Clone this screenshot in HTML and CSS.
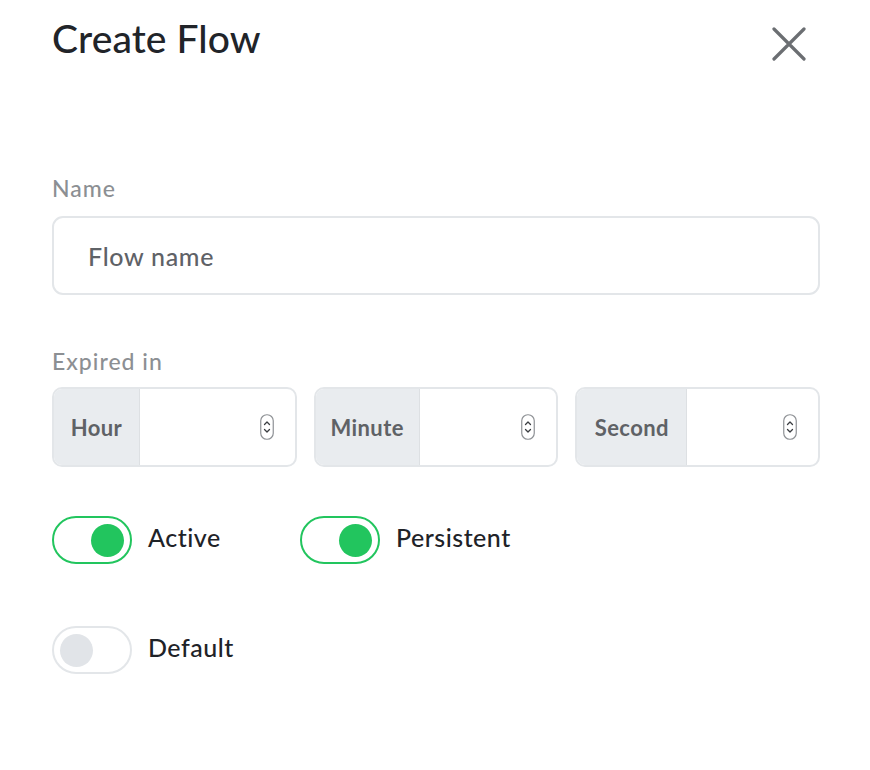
FILE: index.html
```html
<!DOCTYPE html>
<html>
<head>
<meta charset="utf-8">
<link rel="stylesheet" href="styles.css">
</head>
<body>
<div class="modal">
  <div class="header">
    <h1 class="title">Create Flow</h1>
    <button class="close" aria-label="Close">
      <svg width="34" height="34" viewBox="0 0 34 34"><path d="M2 2 L32 32 M32 2 L2 32" stroke="#6b6e72" stroke-width="3.2" stroke-linecap="round" fill="none"/></svg>
    </button>
  </div>

  <div class="field name-field">
    <label class="label">Name</label>
    <div class="input">Flow name</div>
  </div>

  <div class="field expire-field">
    <label class="label">Expired in</label>
    <div class="groups">
      <div class="group">
        <div class="addon addon-hour">Hour</div>
        <div class="num"><span class="spin"><svg width="14" height="26" viewBox="0 0 14 26"><rect x="0.75" y="0.75" width="12.5" height="24.5" rx="6" fill="#fff" stroke="#8e9195" stroke-width="1.2"/><path d="M4.5 10.5 L7 8 L9.5 10.5 M4.5 15.5 L7 18 L9.5 15.5" stroke="#3a3d41" stroke-width="1.3" fill="none" stroke-linecap="round" stroke-linejoin="round"/></svg></span></div>
      </div>
      <div class="group">
        <div class="addon addon-minute">Minute</div>
        <div class="num"><span class="spin"><svg width="14" height="26" viewBox="0 0 14 26"><rect x="0.75" y="0.75" width="12.5" height="24.5" rx="6" fill="#fff" stroke="#8e9195" stroke-width="1.2"/><path d="M4.5 10.5 L7 8 L9.5 10.5 M4.5 15.5 L7 18 L9.5 15.5" stroke="#3a3d41" stroke-width="1.3" fill="none" stroke-linecap="round" stroke-linejoin="round"/></svg></span></div>
      </div>
      <div class="group">
        <div class="addon addon-second">Second</div>
        <div class="num"><span class="spin"><svg width="14" height="26" viewBox="0 0 14 26"><rect x="0.75" y="0.75" width="12.5" height="24.5" rx="6" fill="#fff" stroke="#8e9195" stroke-width="1.2"/><path d="M4.5 10.5 L7 8 L9.5 10.5 M4.5 15.5 L7 18 L9.5 15.5" stroke="#3a3d41" stroke-width="1.3" fill="none" stroke-linecap="round" stroke-linejoin="round"/></svg></span></div>
      </div>
    </div>
  </div>

  <div class="toggles">
    <div class="toggle-item item-active">
      <span class="switch on"><span class="knob"></span></span>
      <span class="toggle-label">Active</span>
    </div>
    <div class="toggle-item">
      <span class="switch on"><span class="knob"></span></span>
      <span class="toggle-label">Persistent</span>
    </div>
  </div>
  <div class="toggles toggles-second">
    <div class="toggle-item">
      <span class="switch off"><span class="knob"></span></span>
      <span class="toggle-label">Default</span>
    </div>
  </div>
</div>
</body>
</html>
```

FILE: styles.css
```css
* { box-sizing: border-box; }
html, body { margin: 0; padding: 0; background: #fff; }
body {
  font-family: Lato, "Open Sans", sans-serif;
  width: 870px;
  height: 770px;
  overflow: hidden;
}
.modal {
  padding: 13px 50px 0 52px;
  width: 870px;
}
.header {
  display: flex;
  justify-content: space-between;
  align-items: flex-start;
}
.title {
  margin: 0;
  font-weight: 500;
  font-size: 39px;
  line-height: 50px;
  color: #212429;
  letter-spacing: 0.1px;
}
.close {
  border: 0;
  background: none;
  padding: 0;
  margin: 14px 14px 0 0;
  width: 34px;
  height: 34px;
  cursor: pointer;
}
.field { display: flex; flex-direction: column; }
.name-field { margin-top: 112px; }
.label {
  font-size: 23px;
  line-height: 26px;
  font-weight: 500;
  letter-spacing: 1px;
  color: #8c8f93;
  margin-bottom: 15px;
}
.input {
  height: 79px;
  border: 2px solid #e3e6e9;
  border-radius: 11px;
  padding: 0 0 0 34px;
  display: flex;
  align-items: center;
  font-size: 25px;
  font-weight: 500;
  letter-spacing: 0.7px;
  color: #5f6267;
}
.expire-field { margin-top: 53px; }
.expire-field .label { margin-bottom: 13px; }
.groups {
  display: grid;
  grid-template-columns: 1fr 1fr 1fr;
  gap: 17px;
}
.group {
  display: flex;
  height: 80px;
  border: 2px solid #e3e6e9;
  border-radius: 10px;
  overflow: hidden;
}
.addon {
  background: #e9ecef;
  border-right: 1px solid #dde0e3;
  display: flex;
  align-items: center;
  justify-content: center;
  font-size: 22px;
  font-weight: 700;
  letter-spacing: 0.4px;
  color: #5f6266;
}
.addon-hour { width: 86px; }
.addon-minute { width: 104px; }
.addon-second { width: 110px; }
.num {
  flex: 1;
  display: flex;
  align-items: center;
  justify-content: flex-end;
  padding-right: 21px;
}
.spin { display: flex; }
.toggles {
  display: flex;
  margin-top: 49px;
}
.toggles-second { margin-top: 62px; }
.toggle-item {
  display: flex;
  align-items: center;
}
.item-active { width: 248px; }
.switch {
  width: 80px;
  height: 48px;
  border-radius: 24px;
  border: 2px solid #e3e6e9;
  display: flex;
  align-items: center;
  padding: 0 6px;
  background: #fff;
}
.switch.on { border-color: #22c55e; justify-content: flex-end; }
.knob {
  width: 33px;
  height: 33px;
  border-radius: 50%;
  background: #e1e4e8;
}
.switch.on .knob { background: #22c55e; }
.toggle-label {
  margin-left: 16px;
  padding-bottom: 6px;
  font-size: 25px;
  font-weight: 500;
  letter-spacing: 0.5px;
  color: #1f2328;
}
```
